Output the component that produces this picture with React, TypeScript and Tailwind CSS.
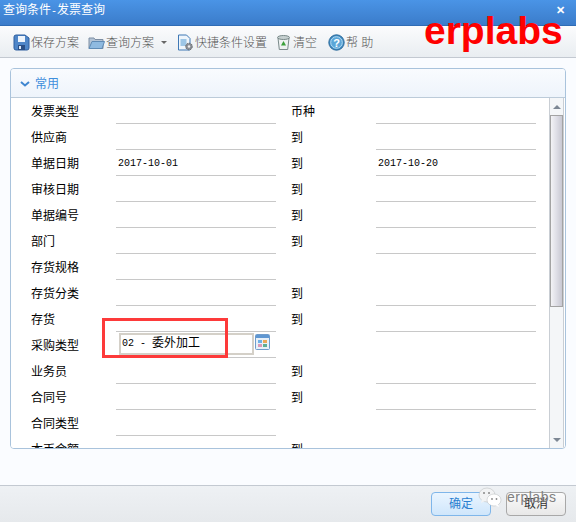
import React from "react";

const rows: { l: string; a?: string; m?: string; b?: string; noRight?: boolean }[] = [
  { l: "发票类型", m: "币种" },
  { l: "供应商", m: "到" },
  { l: "单据日期", a: "2017-10-01", m: "到", b: "2017-10-20" },
  { l: "审核日期", m: "到" },
  { l: "单据编号", m: "到" },
  { l: "部门", m: "到" },
  { l: "存货规格", noRight: true },
  { l: "存货分类", m: "到" },
  { l: "存货", m: "到" },
  { l: "采购类型", noRight: true },
  { l: "业务员", m: "到" },
  { l: "合同号", m: "到" },
  { l: "合同类型", noRight: true },
  { l: "本币金额", m: "到" },
];

const mono = '"Liberation Mono","Noto Sans CJK SC",monospace';

const Save = () => (
  <svg width="17" height="17" viewBox="0 0 17 17">
    <path d="M3 1h9l4 3v10a2 2 0 0 1-2 2H3a2 2 0 0 1-2-2V3a2 2 0 0 1 2-2z" fill="#4f86c8" stroke="#2f5f9f" />
    <rect x="5" y="2" width="7" height="6" fill="#eef4fb" />
    <rect x="5" y="11" width="7" height="5" fill="#2a4f86" />
    <rect x="6" y="12" width="2" height="3" fill="#dfe8f4" />
  </svg>
);
const Folder = () => (
  <svg width="17" height="15" viewBox="0 0 17 15">
    <path d="M1 3h5l1 1.500h8v9H1z" fill="#b4c4d6" stroke="#7d8ea3" />
    <path d="M1 13.500 4 6.500h12.500l-2.500 7z" fill="#8fbae0" stroke="#5f8bb5" />
  </svg>
);
const Settings = () => (
  <svg width="17" height="18" viewBox="0 0 17 18">
    <path d="M1.500 1h8l3.500 3.500V16h-11.500z" fill="#eef5fb" stroke="#3f78b5" />
    <rect x="3.500" y="5" width="6" height="7" fill="#9cc6e6" />
    <circle cx="12" cy="12.500" r="3.300" fill="#8a8f96" stroke="#666" strokeDasharray="1.500 1" />
    <circle cx="12" cy="12.500" r="1.200" fill="#eee" />
  </svg>
);
const Trash = () => (
  <svg width="15" height="17" viewBox="0 0 15 17">
    <path d="M2 4h11l-1.300 11.500H3.300z" fill="#eef2f2" stroke="#7a8a8a" />
    <ellipse cx="7.500" cy="3.500" rx="6" ry="2" fill="#c5cfcf" stroke="#7a8a8a" />
    <path d="M7.500 7l2.500 4.500H5z" fill="#3aa03a" />
  </svg>
);
const Help = () => (
  <svg width="17" height="17" viewBox="0 0 17 17">
    <circle cx="8.500" cy="8.500" r="7.700" fill="#3f8cc4" stroke="#2c6a9a" />
    <circle cx="8.500" cy="8.500" r="5.800" fill="#5ba6d8" stroke="#b7dcf2" />
    <text x="8.500" y="12.500" textAnchor="middle" fontSize="11" fontWeight="700" fill="#fff" fontFamily="Liberation Sans">?</text>
  </svg>
);
const Grid = () => (
  <svg width="15" height="16" viewBox="0 0 15 16">
    <rect x="0.500" y="0.500" width="14" height="15" rx="1" fill="#e8f0f8" stroke="#6f9ccc" />
    <rect x="1" y="1" width="13" height="3" fill="#5f97d2" />
    <rect x="3" y="6" width="4" height="3" fill="#6fb0e6" />
    <rect x="8" y="6" width="4" height="3" fill="#eba858" />
    <rect x="3" y="10" width="4" height="3" fill="#d99ab8" />
    <rect x="8" y="10" width="4" height="3" fill="#5fae94" />
  </svg>
);
const Chat = () => (
  <svg width="24" height="21" viewBox="0 0 24 21">
    <ellipse cx="9" cy="8" rx="8" ry="7" fill="#f2f3f4" stroke="#b5b8bb" strokeWidth="0.500" />
    <path d="M4 12l-1 4 4-2z" fill="#f2f3f4" />
    <ellipse cx="16" cy="13" rx="7" ry="6" fill="#fff" stroke="#b5b8bb" strokeWidth="0.500" />
    <path d="M20 17l1 3-4-2z" fill="#fff" />
    <circle cx="6" cy="6" r="1" fill="#888" />
    <circle cx="11" cy="6" r="1" fill="#888" />
    <circle cx="14" cy="12" r="0.900" fill="#888" />
    <circle cx="18.500" cy="12" r="0.900" fill="#888" />
  </svg>
);

function ToolItem({ icon, label, caret, w }: { icon: React.ReactNode; label: string; caret?: boolean; w: string }) {
  return (
    <div className={`flex items-center ${w}`}>
      <span className="flex w-[19px] shrink-0 justify-center">{icon}</span>
      <span className="whitespace-pre text-[12px] font-light text-[#555]">{label}</span>
      {caret && <span className="ml-[7px] h-0 w-0 border-x-[3px] border-t-[3px] border-x-transparent border-t-[#666]" />}
    </div>
  );
}

export default function App() {
  return (
    <div
      className="relative flex h-[522px] w-[576px] flex-col overflow-hidden bg-[#fafcff] text-black"
      style={{ fontFamily: '"Liberation Sans","Noto Sans CJK SC",sans-serif' }}
    >
      <div className="flex h-[26px] shrink-0 items-center justify-between border-b border-[#2f6cb5] bg-gradient-to-b from-[#4a94e6] to-[#3b7cca] pb-[4px] pl-[3px] pr-[11px]">
        <span className="text-[12px] leading-none text-white">
          查询条件<span className="text-[10px]" style={{ fontFamily: mono }}>-</span>发票查询
        </span>
        <span className="text-[11px] font-bold leading-none text-white">✕</span>
      </div>
      <div className="flex h-[32px] shrink-0 items-center border-b border-[#c3c9d1] bg-gradient-to-b from-[#fbfcfd] to-[#e9edf1] pl-[12px] pt-[2px]">
        <ToolItem icon={<Save />} label="保存方案" w="w-[75px]" />
        <ToolItem icon={<Folder />} label="查询方案" caret w="w-[89px]" />
        <ToolItem icon={<Settings />} label="快捷条件设置" w="w-[98px]" />
        <ToolItem icon={<Trash />} label="清空" w="w-[53px]" />
        <ToolItem icon={<Help />} label="帮 助" w="w-[60px]" />
      </div>
      <div className="flex-1 px-[10px] pt-[10px]">
        <div className="flex h-[381px] flex-col overflow-hidden rounded-[4px] border border-[#a9c3dc]">
          <div className="flex h-[29px] shrink-0 items-center gap-[5px] border-b border-[#bccbd9] bg-gradient-to-b from-[#f9fbfe] to-[#eef4fb] pl-[9px] pt-[1px]">
            <svg width="10" height="6" viewBox="0 0 10 6">
              <path d="M1 1l4 3.500L9 1" fill="none" stroke="#3f86d0" strokeWidth="2" />
            </svg>
            <span className="text-[12px] text-[#3f8fdc]">常用</span>
          </div>
          <div className="flex min-h-0 flex-1 bg-white">
            <div className="min-w-0 flex-1 overflow-hidden">
              {rows.map((r) => (
                <div key={r.l} className="flex h-[26px] shrink-0 text-[12px] leading-none">
                  <div className="flex w-[105px] items-center pl-[20px] pt-[2px]">{r.l}</div>
                  {r.l === "采购类型" ? (
                    <div className="relative w-[160px] border-b border-[#c8c8c8]">
                      <div className="absolute left-[3px] top-[1px] flex h-[22px] w-[135px] items-center whitespace-pre border-2 border-[#d4d0c8] pl-[1px] text-[10px]" style={{ fontFamily: mono }}>
                        02 - <span className="text-[12px]">委外加工</span>
                      </div>
                      <span className="absolute left-[139px] top-[2px]">
                        <Grid />
                      </span>
                    </div>
                  ) : (
                    <div className="flex w-[160px] items-center border-b border-[#c8c8c8] pl-[2px] pt-[2px] text-[10px]" style={{ fontFamily: mono }}>
                      {r.a}
                    </div>
                  )}
                  {!r.noRight && (
                    <>
                      <div className="flex w-[100px] items-center pl-[15px] pt-[2px]">{r.m}</div>
                      <div className="flex w-[160px] items-center border-b border-[#c8c8c8] pl-[2px] pt-[2px] text-[10px]" style={{ fontFamily: mono }}>
                        {r.b}
                      </div>
                    </>
                  )}
                </div>
              ))}
            </div>
            <div className="mr-[1px] flex w-[15px] shrink-0 flex-col border-x border-[#c9ced4] bg-[#f4f6f8]">
              <div className="flex h-[17px] shrink-0 items-center justify-center">
                <span className="h-0 w-0 border-x-[4px] border-b-[4px] border-x-transparent border-b-[#7d8794]" />
              </div>
              <div className="h-[192px] shrink-0 border border-[#a3a3a3] bg-gradient-to-r from-[#f3f3f6] via-[#dedee6] to-[#c8c8d2]" />
              <div className="flex-1" />
              <div className="flex h-[17px] shrink-0 items-center justify-center">
                <span className="h-0 w-0 border-x-[4px] border-t-[4px] border-x-transparent border-t-[#7d8794]" />
              </div>
            </div>
          </div>
        </div>
      </div>
      <div className="flex h-[37px] shrink-0 items-center justify-end gap-[15px] border-t border-[#c3c9d1] bg-gradient-to-b from-[#eef1f4] to-[#e6e9ec] pr-[10px]">
        <button className="h-[24px] w-[60px] rounded-[4px] border border-[#7fb6ea] bg-gradient-to-b from-[#eaf5ff] to-[#cfe6fb] text-[12px] text-[#2b7fd0]">确定</button>
        <button className="h-[24px] w-[60px] rounded-[4px] border border-[#a8a8a8] bg-gradient-to-b from-[#fbfbfb] to-[#e8e8e8] text-[12px] text-[#333]">取消</button>
      </div>

      <div className="pointer-events-none absolute left-[102px] top-[318px] h-[40px] w-[126px] border-[3px] border-[#fd3a3a]" />
      <div className="pointer-events-none absolute left-[424px] top-[7px] text-[39px] font-bold leading-[48px] text-[#ff0000]">
        erplabs
      </div>
      <div className="pointer-events-none absolute left-[478px] top-[487px]">
        <Chat />
      </div>
      <div className="pointer-events-none absolute left-[507px] top-[488px] text-[14px] leading-[18px] tracking-[0.5px] text-[#808080]">erplabs</div>
    </div>
  );
}
